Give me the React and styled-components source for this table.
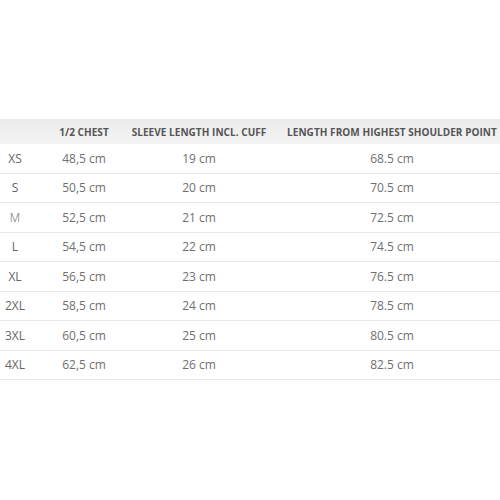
import React from 'react';
import styled, { createGlobalStyle } from 'styled-components';

const GlobalStyle = createGlobalStyle`
  html, body {
    margin: 0;
    padding: 0;
    background: #ffffff;
    overflow: hidden;
  }
  body {
    font-family: "Open Sans", "Liberation Sans", sans-serif;
  }
`;

const Page = styled.div`
  width: 500px;
  height: 500px;
  padding-top: 119px;
  box-sizing: border-box;
  overflow: hidden;
`;

const Table = styled.div`
  width: 524px;
`;

const Row = styled.div`
  display: grid;
  grid-template-columns: 30px 108px 122px 264px;
  height: ${(p) => (p.$head ? '25px' : '28.5px')};
  background: ${(p) => (p.$head ? 'linear-gradient(#ebebeb, #f4f4f4)' : 'transparent')};
  border-bottom: ${(p) => (p.$head ? 'none' : '1px solid #e9e9e9')};
`;

const HeadCell = styled.div`
  display: flex;
  align-items: center;
  justify-content: center;
  white-space: nowrap;
  color: #555;
  font-size: 10px;
  font-weight: 700;
  letter-spacing: 0.05px;
  text-transform: uppercase;
`;

const Cell = styled.div`
  display: flex;
  align-items: center;
  justify-content: center;
  white-space: nowrap;
  color: ${(p) => (p.$size ? '#666' : '#707070')};
  font-size: 12px;
  font-weight: ${(p) => (p.$light ? 300 : 400)};
`;

const headers = ['', '1/2 Chest', 'Sleeve length incl. cuff', 'Length from highest shoulder point'];

const rows = [
  ['XS', '48,5 cm', '19 cm', '68.5 cm'],
  ['S', '50,5 cm', '20 cm', '70.5 cm'],
  ['M', '52,5 cm', '21 cm', '72.5 cm'],
  ['L', '54,5 cm', '22 cm', '74.5 cm'],
  ['XL', '56,5 cm', '23 cm', '76.5 cm'],
  ['2XL', '58,5 cm', '24 cm', '78.5 cm'],
  ['3XL', '60,5 cm', '25 cm', '80.5 cm'],
  ['4XL', '62,5 cm', '26 cm', '82.5 cm'],
];

const App = () => (
  <Page>
    <GlobalStyle />
    <Table>
      <Row $head>
        {headers.map((h, i) => (
          <HeadCell key={i}>{h}</HeadCell>
        ))}
      </Row>
      {rows.map((row) => (
        <Row key={row[0]}>
          {row.map((value, i) => (
            <Cell key={i} $size={i === 0} $light={value === 'M'}>
              {value}
            </Cell>
          ))}
        </Row>
      ))}
    </Table>
  </Page>
);

export default App;
